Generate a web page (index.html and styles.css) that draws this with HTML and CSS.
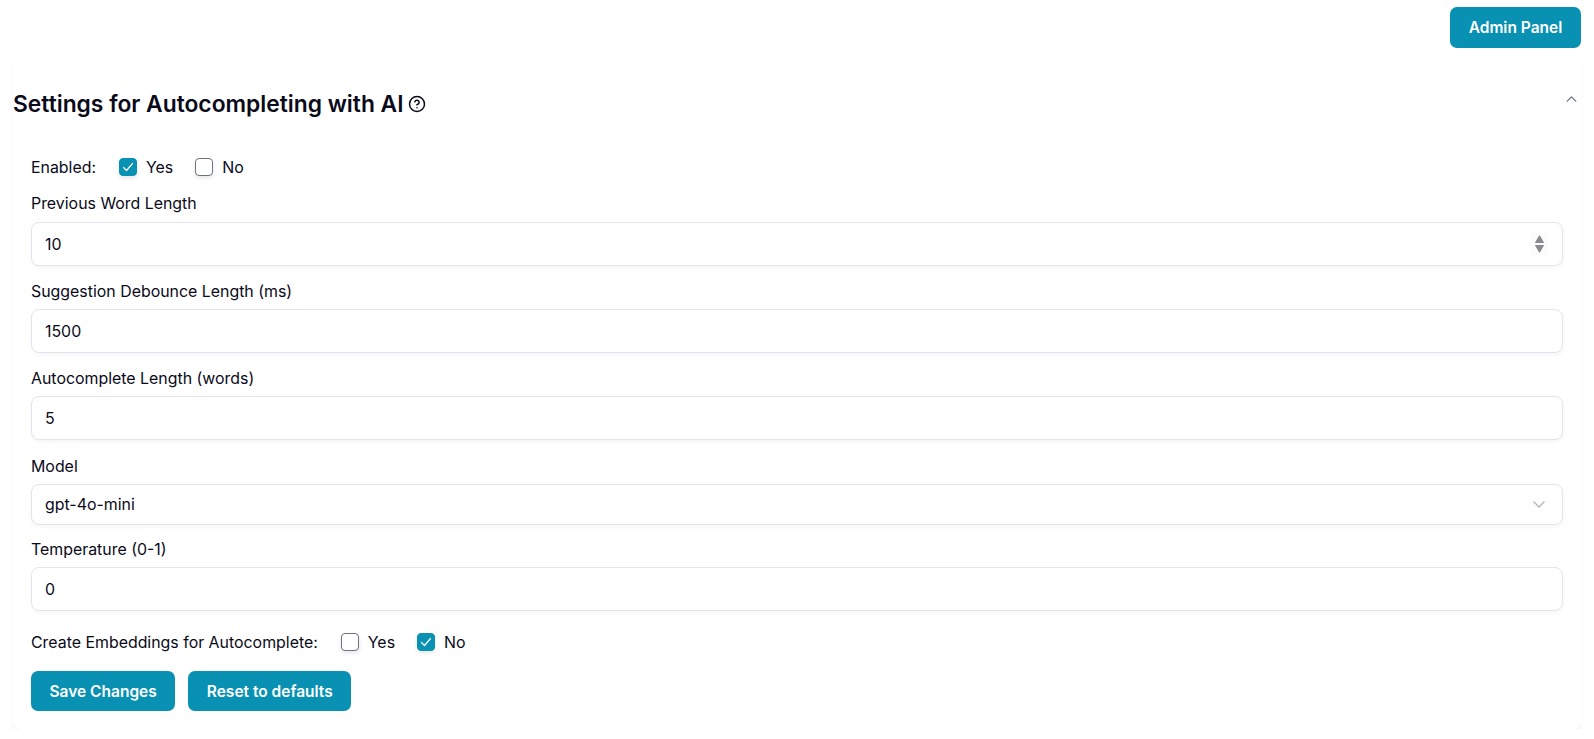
FILE: index.html
```html
<!DOCTYPE html>
<html lang="en">
<head>
  <meta charset="UTF-8">
  <meta name="viewport" content="width=device-width, initial-scale=1.0">
  <title>Settings for Autocompleting with AI</title>
  <link rel="stylesheet" href="styles.css">
</head>
<body>
  <div class="top-bar">
    <button class="button admin-button" type="button">Admin Panel</button>
  </div>

  <section class="card">
    <div class="card-header">
      <h2 class="card-title">Settings for Autocompleting with AI</h2>
      <svg class="help-icon" viewBox="0 0 24 24" fill="none" stroke="currentColor" stroke-width="2" stroke-linecap="round" stroke-linejoin="round">
        <circle cx="12" cy="12" r="10"></circle>
        <path d="M9.1 9a3 3 0 0 1 5.8 1c0 2-3 3-3 3"></path>
        <path d="M12 17h.01"></path>
      </svg>
      <svg class="collapse-icon" viewBox="0 0 12 7" fill="none" stroke="currentColor" stroke-width="1.5" stroke-linecap="round" stroke-linejoin="round">
        <path d="M1 6l5-5 5 5"></path>
      </svg>
    </div>

    <form class="settings-form">
      <div class="check-row">
        <span class="check-label">Enabled:</span>
        <label class="check-option">
          <span class="check-box checked">
            <svg viewBox="0 0 16 16" fill="none" stroke="currentColor" stroke-width="1.2" stroke-linecap="round" stroke-linejoin="round"><path d="M3.5 8.5l3 3 6-7"></path></svg>
          </span>
          Yes
        </label>
        <label class="check-option">
          <span class="check-box"></span>
          No
        </label>
      </div>

      <div class="field">
        <label class="field-label">Previous Word Length</label>
        <div class="field-input">
          <span>10</span>
          <svg class="spin-icon" viewBox="0 0 9 18" fill="#8a8a8e" stroke="#8a8a8e" stroke-width="1.2" stroke-linejoin="round"><path d="M4.500 1L8.300 7.500H.7z"></path><path d="M.7 10.500h7.600L4.500 17z"></path></svg>
        </div>
      </div>

      <div class="field">
        <label class="field-label">Suggestion Debounce Length (ms)</label>
        <div class="field-input"><span>1500</span></div>
      </div>

      <div class="field">
        <label class="field-label">Autocomplete Length (words)</label>
        <div class="field-input"><span>5</span></div>
      </div>

      <div class="field field-model">
        <label class="field-label">Model</label>
        <div class="field-input field-select">
          <span>gpt-4o-mini</span>
          <svg class="select-icon" viewBox="0 0 12 7" fill="none" stroke="currentColor" stroke-width="1.4" stroke-linecap="round" stroke-linejoin="round"><path d="M1 1l5 5 5-5"></path></svg>
        </div>
      </div>

      <div class="field">
        <label class="field-label">Temperature (0-1)</label>
        <div class="field-input"><span>0</span></div>
      </div>

      <div class="check-row embeddings-row">
        <span class="check-label">Create Embeddings for Autocomplete:</span>
        <label class="check-option">
          <span class="check-box"></span>
          Yes
        </label>
        <label class="check-option">
          <span class="check-box checked">
            <svg viewBox="0 0 16 16" fill="none" stroke="currentColor" stroke-width="1.2" stroke-linecap="round" stroke-linejoin="round"><path d="M3.5 8.5l3 3 6-7"></path></svg>
          </span>
          No
        </label>
      </div>

      <div class="form-actions">
        <button class="button" type="button">Save Changes</button>
        <button class="button" type="button">Reset to defaults</button>
      </div>
    </form>
  </section>
</body>
</html>
```

FILE: styles.css
```css
body {
  font-family: Inter, "Liberation Sans", sans-serif;
  margin: 0;
  padding: 0;
  background-color: #fff;
  color: #0a0a1a;
  font-size: 15.9px;
}
.top-bar {
  display: flex;
  justify-content: flex-end;
  padding: 7px 13px 0 0;
}
.button {
  padding: 0 18.5px;
  height: 40px;
  border: none;
  border-radius: 7px;
  background-color: #0891b2;
  color: #fff;
  font-family: inherit;
  font-size: 15.5px;
  font-weight: 600;
  cursor: pointer;
}
.admin-button {
  height: 41px;
  width: 131px;
}
.card {
  margin: 5px 13px 0 13px;
  border-radius: 8px;
  background-color: #fff;
  box-shadow: 0 8px 8px -4px rgba(0, 0, 0, 0.09);
}
.card-header {
  display: flex;
  align-items: center;
  height: 102px;
  padding-right: 4px;
}
.card-title {
  margin: 0 0 2px 0;
  font-size: 22.8px;
  font-weight: 600;
  color: #0a0a1a;
}
.help-icon {
  width: 18px;
  height: 18px;
  margin-left: 4px;
}
.collapse-icon {
  width: 11px;
  height: 6px;
  margin-left: auto;
  margin-bottom: 10px;
  color: #6b7280;
}
.settings-form {
  padding: 0 18px 18px 18px;
}
.check-row {
  display: flex;
  align-items: center;
  height: 24px;
  gap: 22px;
}
.check-label {
  margin-right: 1px;
}
.check-option {
  display: flex;
  align-items: center;
  gap: 9px;
}
.check-box {
  display: flex;
  width: 18px;
  height: 18px;
  box-sizing: border-box;
  border: 1px solid #6b7280;
  border-radius: 4px;
  background-color: #fff;
  box-shadow: 0 2px 4px rgba(0, 0, 0, 0.1);
}
.check-box.checked {
  border-color: #0891b2;
  background-color: #0891b2;
  color: #fff;
}
.field {
  margin-top: 14px;
}
.field-label {
  display: block;
  line-height: 24px;
  margin-bottom: 5px;
}
.check-row + .field {
  margin-top: 13px;
}
.check-row + .field .field-label {
  margin-bottom: 6px;
}
.field-model {
  margin-top: 15px;
}
.field-input {
  display: flex;
  align-items: center;
  justify-content: space-between;
  height: 44px;
  box-sizing: border-box;
  padding: 0 13px;
  border: 1px solid #e2e5f0;
  border-radius: 8px;
  background-color: #fff;
  box-shadow: 0 2px 4px rgba(0, 0, 0, 0.04);
}
.field-select {
  height: 41px;
  margin-bottom: -1px;
}
.spin-icon {
  width: 9px;
  height: 18px;
  padding: 2px 4px;
  margin-right: 1px;
  background-color: #fbfbfb;
}
.select-icon {
  width: 12px;
  height: 7px;
  margin-right: 4px;
  color: #b5b5b8;
}
.embeddings-row {
  margin-top: 19px;
}
.form-actions {
  display: flex;
  gap: 13px;
  margin-top: 17px;
}
```
